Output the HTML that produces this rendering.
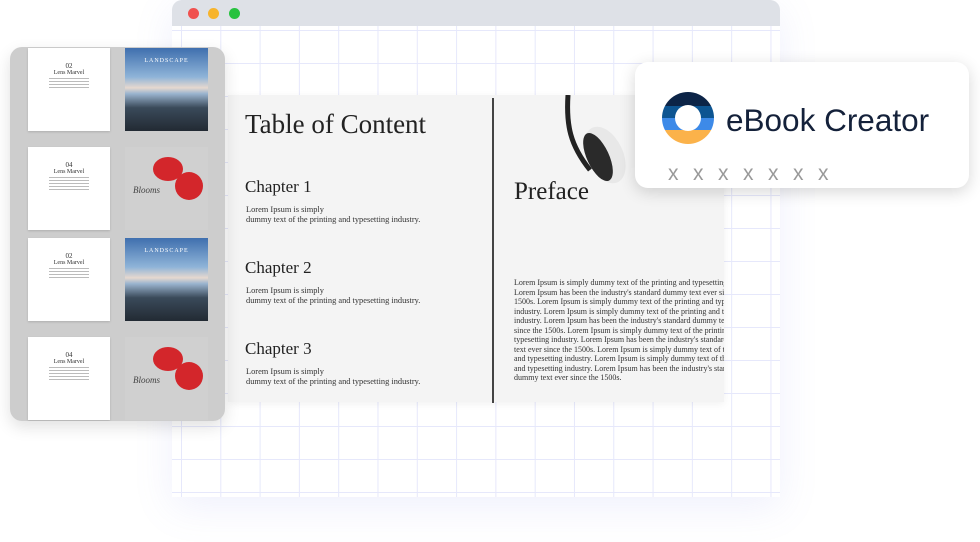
<!DOCTYPE html>
<html><head><meta charset="utf-8"><style>
*{margin:0;padding:0;box-sizing:border-box}
body{width:980px;height:542px;background:#fff;position:relative;overflow:hidden;font-family:"Liberation Serif",serif}
.win{position:absolute;left:172px;top:0;width:608px;height:497px;border-radius:10px 10px 0 0;box-shadow:0 10px 40px rgba(120,130,230,.12);
background-color:#fff;
background-image:linear-gradient(90deg,#e6e8fb 1px,transparent 1px),linear-gradient(#e6e8fb 1px,transparent 1px);
background-size:39.3px 33px;background-position:9px 30px,0 30px}
.bar{position:absolute;left:0;top:0;width:100%;height:26px;background:#dee1e7;border-radius:10px 10px 0 0}
.dot{position:absolute;top:8px;width:11px;height:11px;border-radius:50%}
.panel{position:absolute;left:10px;top:47px;width:215px;height:374px;background:#cdcdcd;border-radius:12px;overflow:hidden;box-shadow:0 6px 16px rgba(0,0,0,.12)}
.pg{position:absolute;left:18px;width:82px;height:83px;background:#fff;box-shadow:0 1px 2px rgba(0,0,0,.15);font-size:6px;text-align:center;color:#333}
.pg b{display:block;margin-top:14px;font-weight:normal;font-size:7px}
.pg i{display:block;margin:2px auto 0;height:1px;background:#bbb;width:40px}
.ls{position:absolute;left:115px;width:83px;height:83px;background:linear-gradient(#3f6fae 0%,#8fb4d8 35%,#e6d8cf 48%,#9ab4cf 55%,#3a4a5a 72%,#222a33 100%);color:#fff;font-size:6px;text-align:center;padding-top:10px;letter-spacing:1px}
.fl{position:absolute;left:115px;width:83px;height:83px;background:#d0d0d0;overflow:hidden}
.fl .p{position:absolute;border-radius:50%;background:#d3262b}
.book{position:absolute;left:228px;top:95px;width:496px;height:307px;background:#f4f4f4;box-shadow:0 2px 8px rgba(0,0,0,.06)}
.div{position:absolute;left:264px;top:3px;width:2px;height:305px;background:#444}
.h{position:absolute;color:#222;font-weight:normal}
.t{position:absolute;font-size:8.4px;line-height:9.6px;color:#333}
.card{position:absolute;left:635px;top:62px;width:334px;height:126px;background:#fff;border-radius:13px;box-shadow:0 4px 16px rgba(0,0,0,.16)}
.x{position:absolute;top:100px;font-family:'Liberation Sans',sans-serif;font-size:21px;color:#999}
</style></head><body>
<div class="win"><div class="bar">
<div class="dot" style="left:16px;background:#f0514f"></div>
<div class="dot" style="left:36px;background:#f7b42c"></div>
<div class="dot" style="left:57px;background:#27c23f"></div></div></div>

<div class="book">
<div class="h" style="left:17px;top:14px;font-size:27px">Table of Content</div>
<div class="h" style="left:17px;top:82px;font-size:17px">Chapter 1</div>
<div class="t" style="left:18px;top:110px">Lorem Ipsum is simply<br>dummy text of the printing and typesetting industry.</div>
<div class="h" style="left:17px;top:163px;font-size:17px">Chapter 2</div>
<div class="t" style="left:18px;top:191px">Lorem Ipsum is simply<br>dummy text of the printing and typesetting industry.</div>
<div class="h" style="left:17px;top:244px;font-size:17px">Chapter 3</div>
<div class="t" style="left:18px;top:272px">Lorem Ipsum is simply<br>dummy text of the printing and typesetting industry.</div>
<div class="div"></div>
<div style="position:absolute;left:266px;top:0;width:230px;height:307px;overflow:hidden">
<svg style="position:absolute;left:66px;top:0" width="70" height="92"><path d="M8 0 C6 30 10 50 30 75" stroke="#222" stroke-width="5" fill="none"/><ellipse cx="45" cy="60" rx="18" ry="30" transform="rotate(-25 45 60)" fill="#e8e8e8"/><ellipse cx="38" cy="62" rx="11" ry="26" transform="rotate(-25 38 62)" fill="#2a2a2a"/></svg>
<div class="h" style="left:20px;top:83px;font-size:25px">Preface</div>
<div class="t" style="left:20px;top:183px;white-space:nowrap;font-size:8px;line-height:9.5px">Lorem Ipsum is simply dummy text of the printing and typesetting<br>Lorem Ipsum has been the industry's standard dummy text ever since<br>1500s. Lorem Ipsum is simply dummy text of the printing and typesetting<br>industry. Lorem Ipsum is simply dummy text of the printing and typesetting<br>industry. Lorem Ipsum has been the industry's standard dummy text<br>since the 1500s. Lorem Ipsum is simply dummy text of the printing<br>typesetting industry. Lorem Ipsum has been the industry's standard<br>text ever since the 1500s. Lorem Ipsum is simply dummy text of the<br>and typesetting industry. Lorem Ipsum is simply dummy text of the<br>and typesetting industry. Lorem Ipsum has been the industry's standard<br>dummy text ever since the 1500s.</div>
</div></div>

<div class="panel">
<div class="pg" style="top:1px"><b>02</b>Lens Marvel<i></i><i></i><i></i><i></i></div>
<div class="ls" style="top:1px">LANDSCAPE</div>
<div class="pg" style="top:100px"><b>04</b>Lens Marvel<i></i><i></i><i></i><i></i><i></i></div>
<div class="fl" style="top:100px"><div class="p" style="left:28px;top:10px;width:30px;height:24px"></div><div class="p" style="left:50px;top:25px;width:28px;height:28px"></div><span style="position:absolute;left:8px;top:38px;font-size:9px;font-style:italic;color:#444">Blooms</span></div>
<div class="pg" style="top:191px"><b>02</b>Lens Marvel<i></i><i></i><i></i><i></i></div>
<div class="ls" style="top:191px">LANDSCAPE</div>
<div class="pg" style="top:290px"><b>04</b>Lens Marvel<i></i><i></i><i></i><i></i><i></i></div>
<div class="fl" style="top:290px"><div class="p" style="left:28px;top:10px;width:30px;height:24px"></div><div class="p" style="left:50px;top:25px;width:28px;height:28px"></div><span style="position:absolute;left:8px;top:38px;font-size:9px;font-style:italic;color:#444">Blooms</span></div>
</div>

<div class="card">
<svg style="position:absolute;left:27px;top:30px" width="52" height="52" viewBox="0 0 52 52"><defs><clipPath id="c"><circle cx="26" cy="26" r="26"/></clipPath></defs><g clip-path="url(#c)"><rect width="52" height="14" fill="#0c2447"/><rect y="14" width="52" height="12" fill="#0d5592"/><rect y="26" width="52" height="12" fill="#3d8ae8"/><rect y="38" width="52" height="14" fill="#fbb24a"/></g><circle cx="26" cy="26" r="13" fill="#fff"/></svg>
<div style="position:absolute;left:91px;top:40px;font-family:'Liberation Sans',sans-serif;font-size:31.5px;color:#14213a">eBook Creator</div>
<span class="x" style="left:33px">x</span><span class="x" style="left:58px">x</span><span class="x" style="left:83px">x</span><span class="x" style="left:108px">x</span><span class="x" style="left:133px">x</span><span class="x" style="left:158px">x</span><span class="x" style="left:183px">x</span>
</div>
</body></html>
